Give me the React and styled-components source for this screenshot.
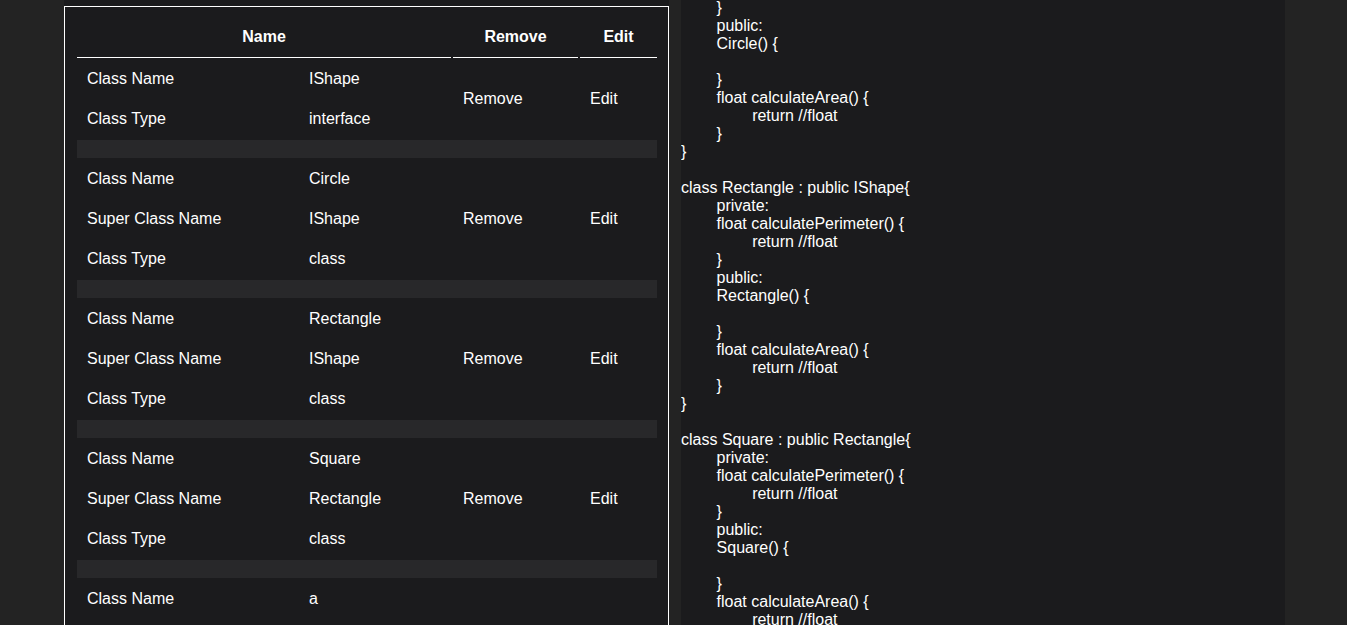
import React, { useLayoutEffect, useRef } from 'react';
import styled, { createGlobalStyle } from 'styled-components';

const GlobalStyle = createGlobalStyle`
  html, body {
    margin: 0;
    height: 100%;
    overflow: hidden;
    background: #232323;
    color: #fff;
    font-family: "Liberation Sans", Arial, sans-serif;
  }
  #root {
    height: 100%;
  }
`;

const Page = styled.div`
  display: flex;
  height: 100%;
  padding-left: 64px;
  gap: 12px;
  box-sizing: border-box;
`;

const ListColumn = styled.div`
  width: 605px;
  flex-shrink: 0;
  background: #1b1b1d;
  padding-top: 6px;
  overflow: hidden;
  box-sizing: border-box;
`;

const ListBox = styled.div`
  border: 1px solid #fff;
  padding: 12px 11px 12px 12px;
`;

const Header = styled.div`
  display: grid;
  grid-template-columns: 374px 125px 77px;
  column-gap: 2px;
  margin-bottom: 2px;
`;

const HeadCell = styled.div`
  height: 39px;
  box-sizing: border-box;
  padding-top: 9px;
  border-bottom: 1px solid #fff;
  text-align: center;
  font-weight: bold;
  font-size: 16px;
  line-height: 18px;
`;

const Groups = styled.div`
  display: flex;
  flex-direction: column;
  gap: 2px;
`;

const Group = styled.div`
  display: grid;
  grid-template-columns: 220px 152px 125px 77px;
  grid-template-rows: repeat(${p => p.$rows}, 38px);
  gap: 2px;
`;

const Cell = styled.div`
  padding: 10px;
  font-size: 16px;
  line-height: 18px;
  white-space: nowrap;
`;

const ActionCell = styled(Cell)`
  grid-row: 1 / span ${p => p.$rows};
  grid-column: ${p => p.$col};
  display: flex;
  align-items: center;
  padding: 0 10px;
  cursor: pointer;
`;

const Separator = styled.div`
  height: 18px;
  background: #28282a;
`;

const CodeColumn = styled.div`
  width: 604px;
  flex-shrink: 0;
  background: #1b1b1d;
  overflow: hidden;
`;

const Code = styled.pre`
  margin: 0;
  font-family: "Liberation Sans", Arial, sans-serif;
  font-size: 16px;
  line-height: 18px;
  tab-size: 8;
  color: #fff;
`;

const classes = [
  { name: 'IShape', type: 'interface' },
  { name: 'Circle', parent: 'IShape', type: 'class' },
  { name: 'Rectangle', parent: 'IShape', type: 'class' },
  { name: 'Square', parent: 'Rectangle', type: 'class' },
  { name: 'a', parent: 'Rectangle', type: 'class' },
];

const code = `class IShape{
\tpublic:
\tvirtual float calculateArea() = 0;
\tvirtual float calculatePerimeter() = 0;
}

class Circle : public IShape{
\tprivate:
\tfloat calculatePerimeter() {
\t\treturn //float
\t}
\tpublic:
\tCircle() {

\t}
\tfloat calculateArea() {
\t\treturn //float
\t}
}

class Rectangle : public IShape{
\tprivate:
\tfloat calculatePerimeter() {
\t\treturn //float
\t}
\tpublic:
\tRectangle() {

\t}
\tfloat calculateArea() {
\t\treturn //float
\t}
}

class Square : public Rectangle{
\tprivate:
\tfloat calculatePerimeter() {
\t\treturn //float
\t}
\tpublic:
\tSquare() {

\t}
\tfloat calculateArea() {
\t\treturn //float
\t}
}

class a : public Rectangle{
\tpublic:
\ta() {

\t}
}`;

function ClassGroup({ item }) {
  const rows = [['Class Name', item.name]];
  if (item.parent) rows.push(['Super Class Name', item.parent]);
  rows.push(['Class Type', item.type]);
  return (
    <Group $rows={rows.length}>
      {rows.map(([label, value], i) => (
        <React.Fragment key={label}>
          <Cell style={{ gridRow: i + 1, gridColumn: 1 }}>{label}</Cell>
          <Cell style={{ gridRow: i + 1, gridColumn: 2 }}>{value}</Cell>
        </React.Fragment>
      ))}
      <ActionCell $rows={rows.length} $col={3}>Remove</ActionCell>
      <ActionCell $rows={rows.length} $col={4}>Edit</ActionCell>
    </Group>
  );
}

export default function App() {
  const codeRef = useRef(null);

  useLayoutEffect(() => {
    if (codeRef.current) codeRef.current.scrollTop = 181;
  }, []);

  return (
    <>
      <GlobalStyle />
      <Page>
        <ListColumn>
          <ListBox>
            <Header>
              <HeadCell>Name</HeadCell>
              <HeadCell>Remove</HeadCell>
              <HeadCell>Edit</HeadCell>
            </Header>
            <Groups>
              {classes.map((item, i) => (
                <React.Fragment key={item.name}>
                  {i > 0 && <Separator />}
                  <ClassGroup item={item} />
                </React.Fragment>
              ))}
            </Groups>
          </ListBox>
        </ListColumn>
        <CodeColumn ref={codeRef}>
          <Code>{code}</Code>
        </CodeColumn>
      </Page>
    </>
  );
}
